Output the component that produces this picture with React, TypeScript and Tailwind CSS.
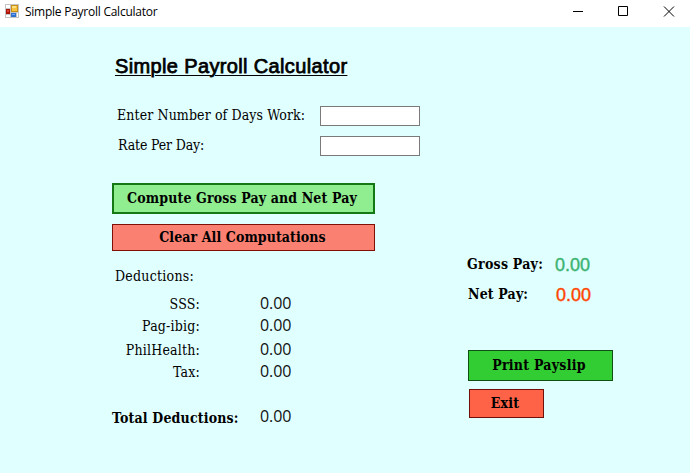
import React from "react";

const serif = "font-['DejaVu_Serif_Condensed','DejaVu_Serif',serif] [font-stretch:condensed] whitespace-nowrap";
const regular = `${serif} text-[14px]`;
const bold = `${serif} text-[14px] font-bold`;

function FormIcon() {
  return (
    <svg className="ml-[5px] mt-1" width="14" height="14" viewBox="0 0 14 14" shapeRendering="crispEdges">
      <rect width="14" height="14" fill="#c4c4c4" />
      <rect x="1" y="1" width="4" height="3" fill="#fff" />
      <rect x="1" y="11" width="4" height="2" fill="#fff" />
      <rect x="12" y="9" width="1" height="4" fill="#fff" />
      <rect x="1" y="5" width="4" height="5" fill="#a81408" />
      <rect x="2" y="6" width="2" height="2" fill="#e04030" />
      <rect x="6" y="1" width="7" height="7" fill="#c89018" />
      <rect x="7" y="2" width="5" height="5" fill="#f8c440" />
      <rect x="7" y="2" width="4" height="2" fill="#ffe080" />
      <rect x="6" y="9" width="5" height="4" fill="#3070d0" />
      <rect x="7" y="10" width="3" height="1" fill="#70a8f0" />
    </svg>
  );
}

function TitleBar() {
  return (
    <header className="flex h-[27px] items-start bg-white text-black">
      <FormIcon />
      <span className="ml-[6px] flex-1 whitespace-nowrap font-['Open_Sans',sans-serif] text-[12px] leading-[24px] tracking-[-0.25px]">
        Simple Payroll Calculator
      </span>
      <svg width="117" height="23" viewBox="0 0 117 23" fill="none" stroke="#000">
        <path d="M0 11.5h10M45.500 6.500h9v9h-9zM91 6.500l10 10M101 6.500l-10 10" />
      </svg>
    </header>
  );
}

const deductions = [
  { label: "SSS:", row: "h-[22px] leading-[22px]" },
  { label: "Pag-ibig:", row: "h-[24px] leading-[22px]" },
  { label: "PhilHealth:", row: "h-[22px] leading-[22px]" },
  { label: "Tax:", row: "h-[22px] leading-[22px]" },
];

function Amount() {
  return <span className="font-['Open_Sans',sans-serif] text-[16px] tracking-[-0.1px] text-[#111]">0.00</span>;
}

export default function App() {
  return (
    <div className="h-[473px] w-[690px] overflow-hidden bg-[#e0ffff] text-black">
      <TitleBar />
      <main className="flex pl-[112px]">
        <section className="w-[308px] pt-[26px]">
          <h1 className="ml-[3px] h-[26px] w-[232px] whitespace-nowrap font-['Liberation_Sans',Arial,sans-serif] text-[20px] leading-[26px] tracking-[0.36px] underline decoration-1 underline-offset-2 [-webkit-text-stroke:0.75px_black]">
            Simple Payroll Calculator
          </h1>
          <div className="mt-[27px] flex h-5 items-start justify-between">
            <label htmlFor="days" className={`${regular} ml-[5px] leading-[18px] tracking-[0.11px]`}>Enter Number of Days Work:</label>
            <input id="days" className="h-5 w-[100px] border border-[#7a7a7a] bg-white px-1 text-sm outline-none" />
          </div>
          <div className="mt-[10px] flex h-5 items-start justify-between">
            <label htmlFor="rate" className={`${regular} ml-[6px] leading-[18px] tracking-[-0.15px]`}>Rate Per Day:</label>
            <input id="rate" className="h-5 w-[100px] border border-[#7a7a7a] bg-white px-1 text-sm outline-none" />
          </div>
          <button className={`${bold} mt-[27px] flex h-[31px] w-[263px] justify-center border-2 border-[#147814] bg-[#90ee90] pr-[3px] leading-[26px] tracking-[0.13px]`}>
            Compute Gross Pay and Net Pay
          </button>
          <button className={`${bold} mt-[10px] flex h-[27px] w-[263px] justify-center border border-[#800f08] bg-[#fa8072] pr-[2px] leading-[24px] tracking-[0.08px]`}>
            Clear All Computations
          </button>
          <p className={`${regular} ml-[3px] mt-[14px] h-[22px] leading-[22px] tracking-[0.25px]`}>Deductions:</p>
          <div className="mt-[5px]">
            {deductions.map((d) => (
              <div key={d.label} className={`flex ${d.row}`}>
                <span className={`${regular} w-[88px] pt-px text-right tracking-[0.2px]`}>{d.label}</span>
                <span className="ml-[60px]"><Amount /></span>
              </div>
            ))}
          </div>
          <div className="mt-[23px] flex h-[22px] leading-[22px]">
            <span className={`${bold} w-[148px] pt-[2px] tracking-[0.17px]`}>Total Deductions:</span>
            <Amount />
          </div>
        </section>
        <section className="ml-[47px] pt-[227px]">
          <div className="flex h-[22px] leading-[22px]">
            <span className={`${bold} w-[88px] leading-[20px] tracking-[0.25px]`}>Gross Pay:</span>
            <span className="font-['Liberation_Sans',Arial,sans-serif] text-[18px] text-[#3cb371] [-webkit-text-stroke:0.4px_#3cb371]">0.00</span>
          </div>
          <div className="ml-px mt-2 flex h-[22px] leading-[22px]">
            <span className={`${bold} w-[88px] leading-[20px] tracking-[0.15px]`}>Net Pay:</span>
            <span className="font-['Liberation_Sans',Arial,sans-serif] text-[18px] text-[#ff4500] [-webkit-text-stroke:0.4px_#ff4500]">0.00</span>
          </div>
          <button className={`${bold} ml-px mt-[44px] flex h-[31px] w-[145px] justify-center border border-[#0f5014] bg-[#32cd32] pr-[3px] leading-[28px] tracking-[0.25px]`}>
            Print Payslip
          </button>
          <button className={`${bold} ml-[2px] mt-2 flex h-[29px] w-[75px] justify-center border border-[#701008] bg-[#ff6347] pr-[3px] leading-[26px] tracking-[0.25px]`}>
            Exit
          </button>
        </section>
      </main>
    </div>
  );
}
